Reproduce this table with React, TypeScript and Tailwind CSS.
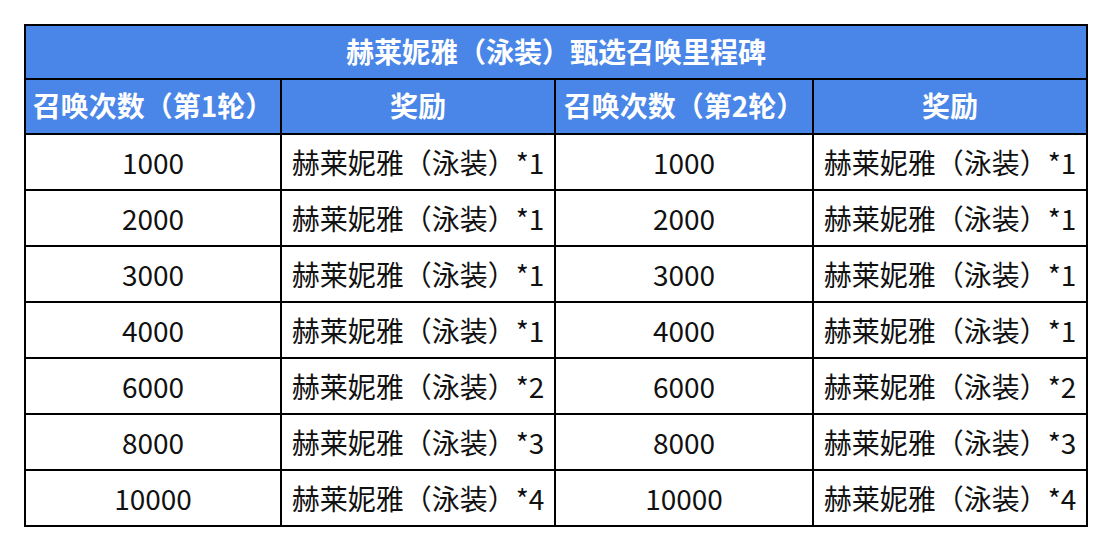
import React from "react";

const rows = [
  { count: "1000", qty: 1 },
  { count: "2000", qty: 1 },
  { count: "3000", qty: 1 },
  { count: "4000", qty: 1 },
  { count: "6000", qty: 2 },
  { count: "8000", qty: 3 },
  { count: "10000", qty: 4 },
];

const reward = "赫莱妮雅（泳装）";

const widths = ["w-[256px]", "w-[274px]", "w-[258px]", "flex-1"];

function Cell({ i, children, head }: { i: number; children: React.ReactNode; head?: boolean }) {
  return (
    <div
      className={
        widths[i] +
        " flex items-center justify-center whitespace-nowrap " +
        (head ? "pb-[3px] " : "pb-[1px] ") +
        (i < 3 ? "border-r-2 border-black" : "")
      }
    >
      {children}
    </div>
  );
}

function Reward({ qty }: { qty: number }) {
  return (
    <>
      <span>{reward}</span>
      <span>*{qty}</span>
    </>
  );
}

export default function App() {
  return (
    <div
      className="w-[1112px] h-[552px] bg-white pt-[24px] pl-[24px]"
      style={{ fontFamily: '"Noto Sans CJK SC", "Noto Sans", sans-serif' }}
    >
      <div className="w-[1064px] border-2 border-black text-[28px] leading-none">
        <div className="h-[54px] pb-[3px] border-b-2 border-black bg-[#4a86e8] text-white font-bold flex items-center justify-center">
          赫莱妮雅（泳装）甄选召唤里程碑
        </div>
        <div className="flex h-[55px] border-b-2 border-black bg-[#4a86e8] text-white font-bold">
          <Cell i={0} head>召唤次数（第1轮）</Cell>
          <Cell i={1} head>奖励</Cell>
          <Cell i={2} head>召唤次数（第2轮）</Cell>
          <Cell i={3} head>奖励</Cell>
        </div>
        {rows.map((r, idx) => (
          <div
            key={r.count}
            className={
              "flex text-[#111] " +
              (idx === rows.length - 1 ? "h-[54px]" : "h-[56px] border-b-2 border-black")
            }
          >
            <Cell i={0}>{r.count}</Cell>
            <Cell i={1}>
              <Reward qty={r.qty} />
            </Cell>
            <Cell i={2}>{r.count}</Cell>
            <Cell i={3}>
              <Reward qty={r.qty} />
            </Cell>
          </div>
        ))}
      </div>
    </div>
  );
}
